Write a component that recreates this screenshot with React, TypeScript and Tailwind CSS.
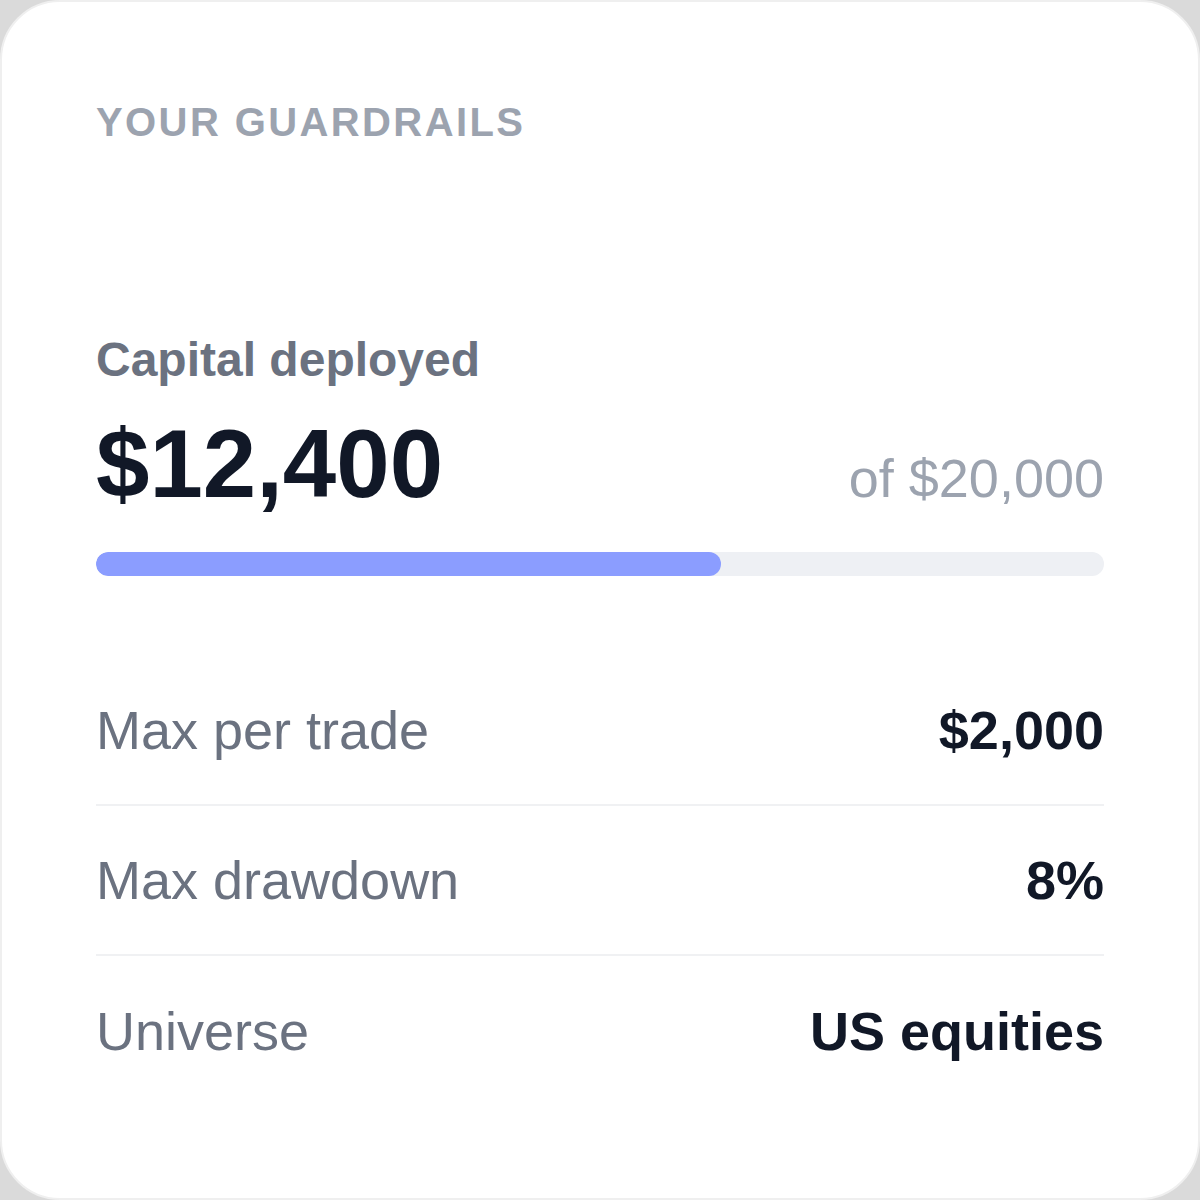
const limits = [
  { label: "Max per trade", value: "$2,000" },
  { label: "Max drawdown", value: "8%" },
  { label: "Universe", value: "US equities" },
];

const deployed = 12400;
const budget = 20000;

export default function App() {
  const pct = (deployed / budget) * 100;

  return (
    <div className="w-[1200px] h-[1200px] bg-[#dadada] font-['Liberation_Sans',Arial,sans-serif]">
      <div className="w-full h-full rounded-[60px] bg-white border-2 border-[#efefef] px-[94px] pt-[96px]">
        <h2 className="text-[40px] leading-[48px] font-bold tracking-[0.06em] text-[#9ca3af]">
          YOUR GUARDRAILS
        </h2>

        {/* capital usage */}
        <div className="mt-[186px]">
          <div className="text-[48px] leading-[56px] font-bold text-[#6b7280]">Capital deployed</div>
          <div className="mt-[28px] flex items-baseline justify-between">
            <span className="text-[96px] leading-[96px] font-bold text-[#111827]">
              ${deployed.toLocaleString("en-US")}
            </span>
            <span className="text-[54px] leading-[60px] text-[#9ca3af]">
              of ${budget.toLocaleString("en-US")}
            </span>
          </div>
          <div className="mt-[40px] h-[24px] w-full rounded-full bg-[#eef0f4] overflow-hidden">
            <div className="h-full rounded-full bg-[#8b9dff]" style={{ width: `${pct}%` }} />
          </div>
        </div>

        {/* limits list */}
        <div className="mt-[80px]">
          {limits.map((row, i) => (
            <div
              key={row.label}
              className={`flex items-center justify-between h-[150px] ${
                i < limits.length - 1 ? "border-b-2 border-[#f0f1f3]" : ""
              }`}
            >
              <span className="text-[54px] text-[#6b7280]">{row.label}</span>
              <span className="text-[54px] font-bold text-[#111827]">{row.value}</span>
            </div>
          ))}
        </div>
      </div>
    </div>
  );
}
